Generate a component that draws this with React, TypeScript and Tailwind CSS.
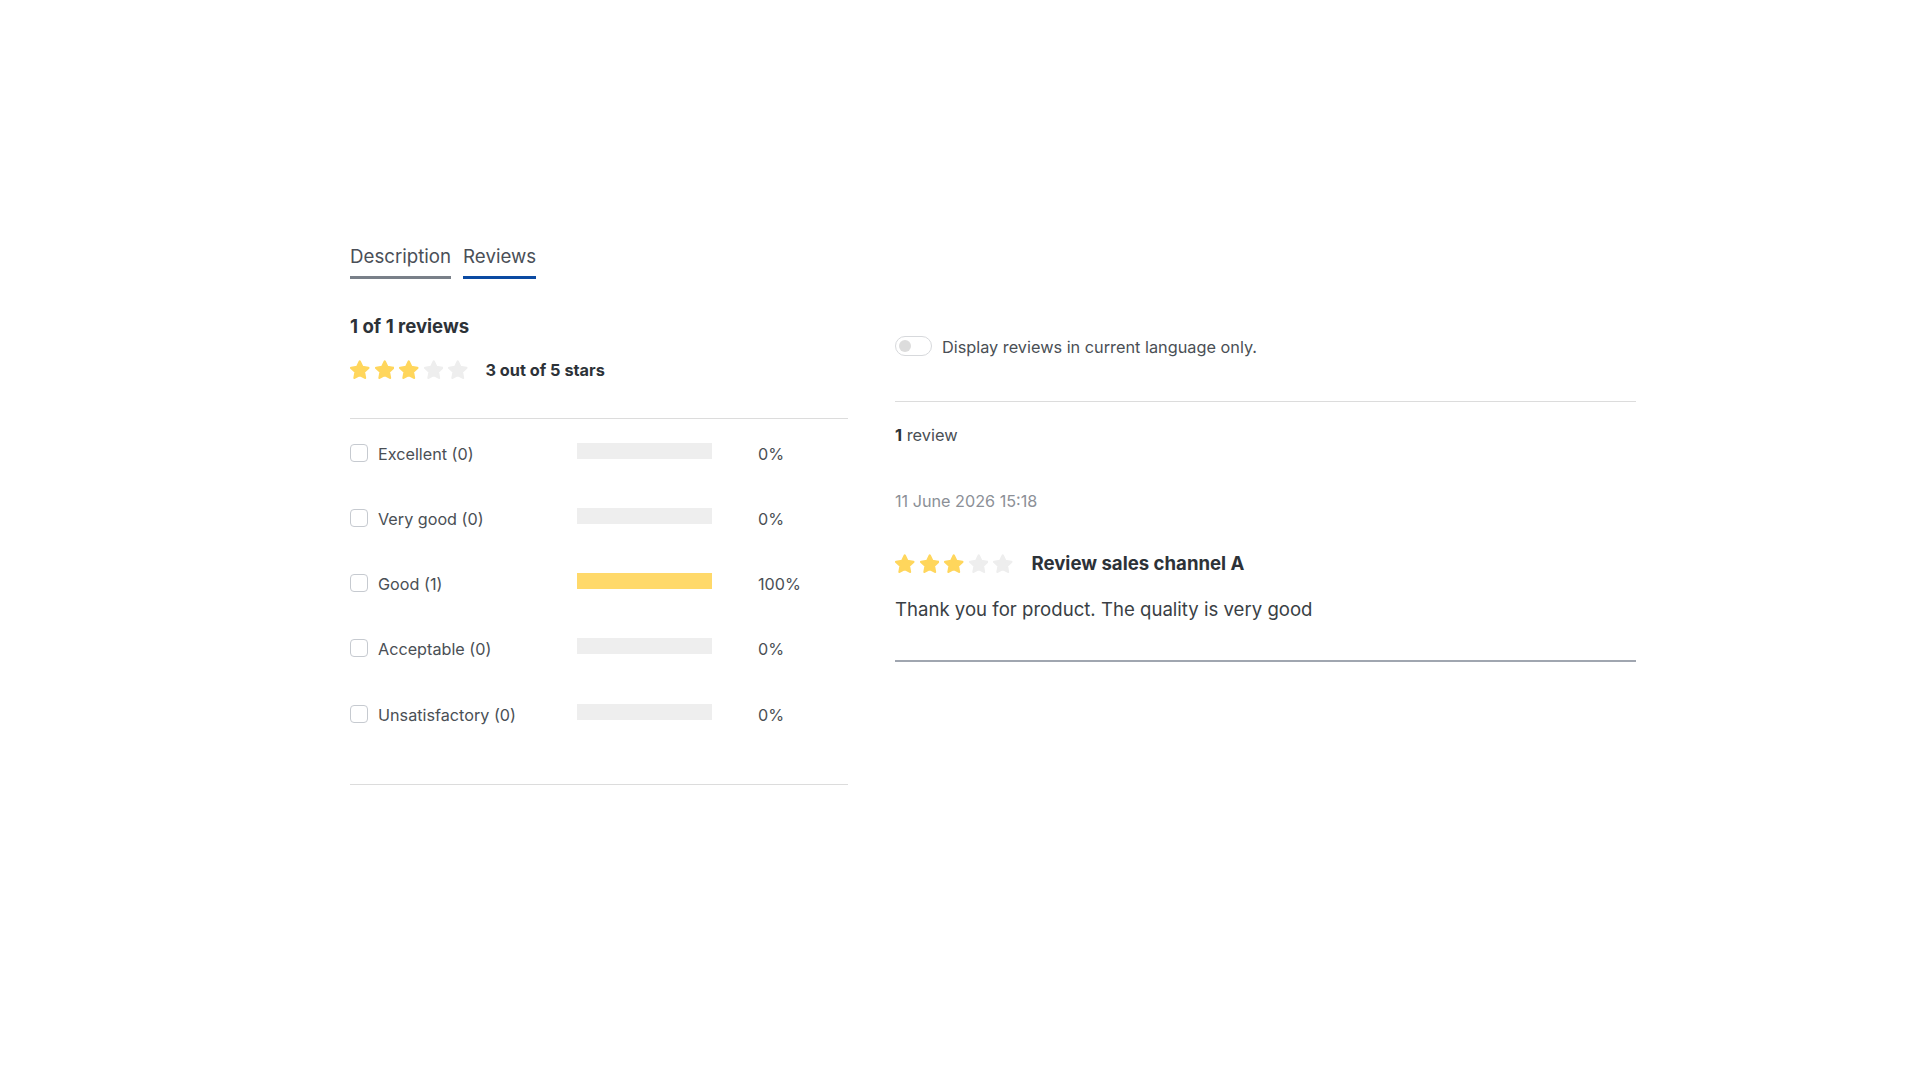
import { useState } from "react";

const STAR =
  "M12 2.8l2.7 5.6 6.1.8-4.5 4.2 1.1 6.1L12 16.6l-5.4 2.9 1.1-6.1-4.5-4.2 6.1-.8z";

const Stars = ({ value }: { value: number }) => (
  <div className="flex items-center gap-[5px]">
    {[1, 2, 3, 4, 5].map((i) => (
      <svg key={i} viewBox="2 1.2 20 20" className="w-[19.5px] h-[19.5px]">
        <path
          d={STAR}
          fill={i <= value ? "#ffd65c" : "#eeeeee"}
          stroke={i <= value ? "#ffd65c" : "#eeeeee"}
          strokeWidth={2.4}
          strokeLinejoin="round"
        />
      </svg>
    ))}
  </div>
);

const ratings = [
  { label: "Excellent", count: 0, pct: 0 },
  { label: "Very good", count: 0, pct: 0 },
  { label: "Good", count: 1, pct: 100 },
  { label: "Acceptable", count: 0, pct: 0 },
  { label: "Unsatisfactory", count: 0, pct: 0 },
];

export default function App() {
  const [tab, setTab] = useState("reviews");
  const [langOnly, setLangOnly] = useState(false);

  return (
    <div className="min-h-screen bg-white pt-[245px] pl-[350px] font-['Inter',sans-serif] text-[#2d3238]">
      {/* Tabs */}
      <div className="flex gap-[12px]">
        <button
          onClick={() => setTab("description")}
          className={`pb-[7px] text-[18.7px] leading-[24px] text-[#4a4f57] border-b-[3px] ${
            tab === "description" ? "border-[#0b4aa2]" : "border-[#798089]"
          }`}
        >
          Description
        </button>
        <button
          onClick={() => setTab("reviews")}
          className={`pb-[7px] text-[18.7px] leading-[24px] text-[#4a4f57] border-b-[3px] ${
            tab === "reviews" ? "border-[#0b4aa2]" : "border-[#798089]"
          }`}
        >
          Reviews
        </button>
      </div>

      <div className="flex gap-[47px]">
        {/* Summary / filter */}
        <div className="w-[498px]">
          <h3 className="mt-[35px] text-[18.6px] leading-[24px] font-bold">1 of 1 reviews</h3>
          <div className="mt-[20px] flex items-center h-[24px] gap-[18px]">
            <Stars value={3} />
            <span className="text-[16.3px] font-bold">3 out of 5 stars</span>
          </div>
          <div className="mt-[36px] border-t border-[#dcdcdc]" />
          <div className="flex flex-col">
            {ratings.map((r) => (
              <label key={r.label} className="flex items-center h-[65.25px] cursor-pointer">
                <div className="w-[227px] flex items-center translate-y-[1px]">
                  <span className="w-[18px] h-[18px] rounded-[4px] border border-[#c6cad0] bg-white" />
                  <span className="ml-[10px] text-[16.2px] leading-[24px] text-[#4a4f55] translate-y-[1px]">
                    {r.label} ({r.count})
                  </span>
                </div>
                <div className="w-[135px] h-[16px] bg-[#eeeeee] -translate-y-[1px]">
                  <div className="h-full bg-[#ffd96a]" style={{ width: `${r.pct}%` }} />
                </div>
                <span className="ml-[46px] text-[16.2px] leading-[24px] text-[#4a4f55] translate-y-[2px]">
                  {r.pct}%
                </span>
              </label>
            ))}
          </div>
          <div className="mt-[39px] border-t border-[#dcdcdc]" />
        </div>

        {/* Review list */}
        <div className="w-[741px]">
          <div className="mt-[57px] flex items-center h-[20px]">
            <button
              onClick={() => setLangOnly(!langOnly)}
              className="w-[37px] h-[20px] rounded-full border border-[#d7d9dc] bg-white flex items-center px-[3px]"
            >
              <span className="w-[12px] h-[12px] rounded-full bg-[#dcdcdc]" />
            </button>
            <span className="ml-[10px] text-[16.3px] text-[#4a4f55] translate-y-[1px]">
              Display reviews in current language only.
            </span>
          </div>
          <div className="mt-[45px] border-t border-[#dcdcdc]" />
          <p className="mt-[21px] text-[16.4px] leading-[24px] text-[#4a4f55]">
            <span className="font-bold text-[#2d3238]">1</span> review
          </p>
          <p className="mt-[42px] text-[16.2px] leading-[24px] text-[#8c9097]">11 June 2026 15:18</p>
          <div className="mt-[39px] flex items-center h-[24px] gap-[19px]">
            <Stars value={3} />
            <span className="text-[18.6px] font-bold">Review sales channel A</span>
          </div>
          <p className="mt-[19px] text-[18.6px] leading-[28px] text-[#3a3f45]">
            Thank you for product. The quality is very good
          </p>
          <div className="mt-[37px] border-t-2 border-[#a0a6b0]" />
        </div>
      </div>
    </div>
  );
}
